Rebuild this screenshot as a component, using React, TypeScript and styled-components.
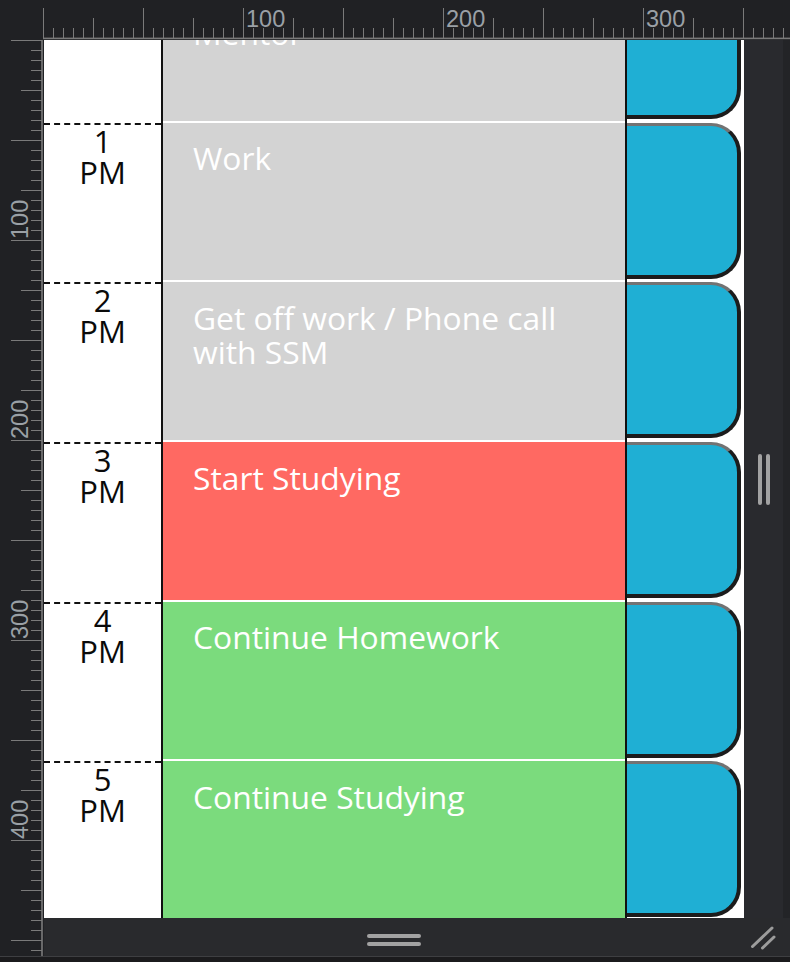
import React from "react";
import styled, { createGlobalStyle } from "styled-components";

const GlobalStyle = createGlobalStyle`
  html, body { margin: 0; padding: 0; background: #202124; overflow: hidden; }
  #root { width: 790px; height: 962px; }
`;

const Frame = styled.div`
  display: grid;
  grid-template-columns: 44px 700px 46px;
  grid-template-rows: 40px 878px 38px 6px;
  width: 790px;
  height: 962px;
  background: #202124;
`;

const TopRulerSvg = styled.svg`
  grid-column: 1 / 4;
  grid-row: 1;
  display: block;
`;

const LeftRulerSvg = styled.svg`
  grid-column: 1;
  grid-row: 2 / 4;
  display: block;
`;

const Page = styled.div`
  grid-column: 2;
  grid-row: 2;
  background: #ffffff;
  overflow: hidden;
  font-family: "Open Sans", "Noto Sans", sans-serif;
`;

const Schedule = styled.div`
  display: flex;
  flex-direction: column;
  margin-top: -78.9px;
`;

const Row = styled.div`
  display: grid;
  grid-template-columns: 119px 1fr 119px;
  height: 159.67px;
  flex: none;
`;

const TimeCell = styled.div`
  border-right: 2px solid #111;
  display: flex;
  flex-direction: column;
`;

const TimeLabel = styled.div`
  margin-top: 2px;
  border-top: 2px dashed #111;
  padding-top: 1px;
  display: flex;
  flex-direction: column;
  align-items: center;
  font-size: 31px;
  line-height: 31px;
  color: #0a0a0a;
`;

const EventCell = styled.div<{ $bg: string }>`
  border-top: 2px solid #ffffff;
  background: ${(p) => p.$bg};
  color: #ffffff;
  font-size: 31.8px;
  line-height: 34px;
  padding: 18.5px 30px 0 30px;
`;

const TabCell = styled.div`
  border-left: 2px solid #111;
  padding: 2px 3px 1.8px 0;
  display: flex;
`;

const Tab = styled.div`
  flex: 1;
  background: #1fafd4;
  border-top: 3px solid #737373;
  border-right: 4px solid #1c1c1c;
  border-bottom: 4px solid #1c1c1c;
  border-radius: 0 30px 30px 0;
`;

const SidePanel = styled.div`
  grid-column: 3;
  grid-row: 2;
  display: flex;
  background: #292a2e;
`;

const GripArea = styled.div`
  flex: 1;
  display: flex;
  align-items: center;
  justify-content: center;
  gap: 4px;
`;

const VBar = styled.div`
  width: 4px;
  height: 51px;
  border-radius: 2px;
  background: #a2a2a2;
`;

const Strip = styled.div`
  width: 7px;
  background: #232427;
`;

const BottomBar = styled.div`
  grid-column: 2;
  grid-row: 3;
  background: #292a2d;
  display: flex;
  flex-direction: column;
  align-items: center;
  padding-top: 16px;
  gap: 4px;
`;

const HBar = styled.div`
  width: 54px;
  height: 4px;
  border-radius: 2px;
  background: #a2a2a2;
`;

const ResizeCorner = styled.div`
  grid-column: 3;
  grid-row: 3;
  background: #292a2d;
  display: flex;
  align-items: flex-end;
  justify-content: flex-start;
`;

const BottomEdge = styled.div`
  grid-column: 1 / 4;
  grid-row: 4;
  background: #1b1b1d;
  border-top: 1px solid #3e3f42;
`;

type Entry = { hour: number; text: string; color: string };

const entries: Entry[] = [
  { hour: 12, text: "Lunch / Meeting with Mentor", color: "#d3d3d3" },
  { hour: 1, text: "Work", color: "#d3d3d3" },
  { hour: 2, text: "Get off work / Phone call with SSM", color: "#d3d3d3" },
  { hour: 3, text: "Start Studying", color: "#ff6962" },
  { hour: 4, text: "Continue Homework", color: "#7bdb7d" },
  { hour: 5, text: "Continue Studying", color: "#7bdb7d" },
];

const TICK = "#7a7a7a";
const LABEL = "#9aa0a6";
const RULER_FONT = '"Liberation Sans", Arial, sans-serif';

function TopRuler() {
  const ticks = [];
  for (let i = 0; i <= 74; i++) {
    const x = 43.5 + i * 10;
    const y1 = i % 10 === 0 ? 8 : i % 5 === 0 ? 18 : 28;
    ticks.push(<line key={i} x1={x} x2={x} y1={y1} y2={38} stroke={TICK} strokeWidth={1} />);
  }
  const labels = [20, 40, 60].map((i) => (
    <text key={i} x={43.5 + i * 10 + 2.5} y={26.5} fill={LABEL} fontSize={23.5} fontFamily={RULER_FONT}>
      {i * 5}
    </text>
  ));
  return (
    <TopRulerSvg width={790} height={40} viewBox="0 0 790 40">
      {ticks}
      {labels}
      <rect x={43} y={37.6} width={747} height={1.6} fill={TICK} />
    </TopRulerSvg>
  );
}

function LeftRuler() {
  const ticks = [];
  for (let j = 0; j <= 91; j++) {
    const y = 0.5 + j * 10;
    const x1 = j % 10 === 0 ? 11 : j % 5 === 0 ? 21 : 31;
    ticks.push(<line key={j} x1={x1} x2={42} y1={y} y2={y} stroke={TICK} strokeWidth={1} />);
  }
  const labels = [20, 40, 60, 80].map((j) => (
    <text
      key={j}
      transform={`translate(27.5 ${j * 10 - 1}) rotate(-90)`}
      fill={LABEL}
      fontSize={23.5}
      fontFamily={RULER_FONT}
    >
      {j * 5}
    </text>
  ));
  return (
    <LeftRulerSvg width={44} height={916} viewBox="0 0 44 916">
      {ticks}
      {labels}
      <rect x={41.2} y={0} width={1.6} height={916} fill={TICK} />
    </LeftRulerSvg>
  );
}

export default function App() {
  return (
    <>
      <GlobalStyle />
      <Frame>
        <TopRuler />
        <LeftRuler />
        <Page>
          <Schedule>
            {entries.map((e) => (
              <Row key={e.hour}>
                <TimeCell>
                  <TimeLabel>
                    <span>{e.hour}</span>
                    <span>PM</span>
                  </TimeLabel>
                </TimeCell>
                <EventCell $bg={e.color}>{e.text}</EventCell>
                <TabCell>
                  <Tab />
                </TabCell>
              </Row>
            ))}
          </Schedule>
        </Page>
        <SidePanel>
          <GripArea>
            <VBar />
            <VBar />
          </GripArea>
          <Strip />
        </SidePanel>
        <BottomBar>
          <HBar />
          <HBar />
        </BottomBar>
        <ResizeCorner>
          <svg width={46} height={38} viewBox="0 0 46 38">
            <line x1={8.5} y1={28.5} x2={28} y2={10} stroke="#9c9c9c" strokeWidth={3} strokeLinecap="round" />
            <line x1={18.5} y1={30} x2={30} y2={19} stroke="#9c9c9c" strokeWidth={3} strokeLinecap="round" />
          </svg>
        </ResizeCorner>
        <BottomEdge />
      </Frame>
    </>
  );
}
